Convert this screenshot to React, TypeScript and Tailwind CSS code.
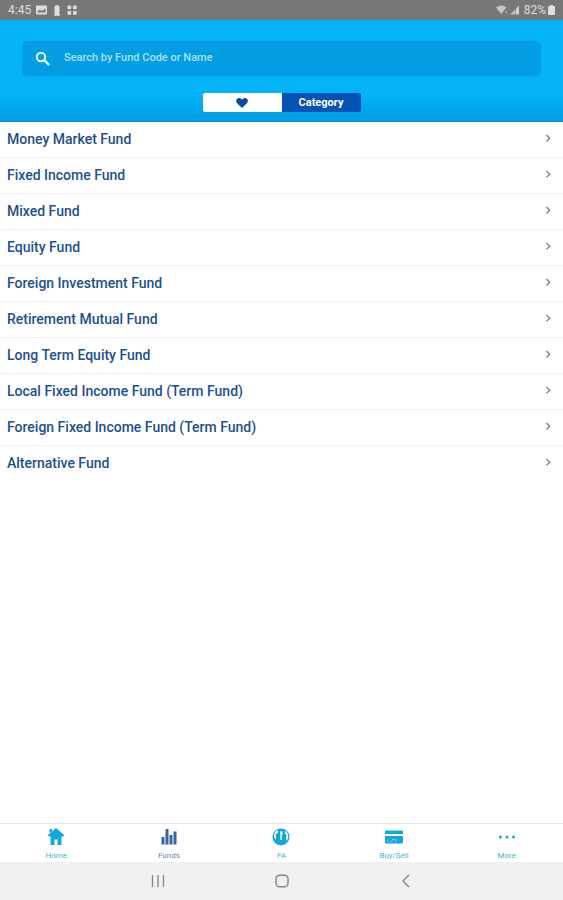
import { useState } from "react";
import type { ReactNode } from "react";

const categories = [
  "Money Market Fund",
  "Fixed Income Fund",
  "Mixed Fund",
  "Equity Fund",
  "Foreign Investment Fund",
  "Retirement Mutual Fund",
  "Long Term Equity Fund",
  "Local Fixed Income Fund (Term Fund)",
  "Foreign Fixed Income Fund (Term Fund)",
  "Alternative Fund",
];

function StatusBar() {
  return (
    <div className="flex h-5 items-center justify-between bg-[#777777] px-2 text-[#dedede]">
      <div className="flex items-center gap-[5px]">
        <span className="text-[12px] leading-5">4:45</span>
        <svg width="11" height="10" viewBox="0 0 11 10" fill="currentColor">
          <path fillRule="evenodd" d="M1 .5h9a1 1 0 0 1 1 1v7a1 1 0 0 1-1 1H1a1 1 0 0 1-1-1v-7a1 1 0 0 1 1-1Zm.5 7h8V3.200L6 6 4 4.600 1.500 6.500Z" />
        </svg>
        <svg width="10" height="11" viewBox="0 0 10 11" fill="currentColor">
          <path d="M5 0a2.800 2.800 0 0 1 2.200 4.400L8 5.500 7.200 7l.8 3.700H2L2.800 7 2 5.500l.8-1.100A2.800 2.800 0 0 1 5 0Z" />
        </svg>
        <svg width="10" height="10" viewBox="0 0 10 10" fill="currentColor">
          <rect x="0.500" y="0.500" width="3.700" height="3.700" rx="1" />
          <rect x="6" y="0.500" width="3.700" height="3.700" rx="1" />
          <rect x="0.500" y="6" width="3.700" height="3.700" rx="1" />
          <rect x="6" y="6" width="3.700" height="3.700" rx="1" />
        </svg>
      </div>
      <div className="flex items-center gap-[2px]">
        <svg width="12" height="10" viewBox="0 0 12 10" fill="currentColor">
          <path d="M0 2.500a7.800 7.800 0 0 1 10.400 0L5.200 9Z" opacity="0.750" />
          <path d="M9 6.500h2.500L10.200 9Z" opacity="0.600" />
        </svg>
        <svg width="10" height="10" viewBox="0 0 10 10" fill="currentColor">
          <path d="M0 9.500 5.500 4v5.500Z" opacity="0.700" />
          <path d="M6 3.500 9 .5v9H6Z" opacity="0.850" />
        </svg>
        <span className="pl-[2px] text-[12px] leading-5">82%</span>
        <svg width="7" height="10" viewBox="0 0 7 10" fill="currentColor">
          <path d="M2 0h3v1h1a1 1 0 0 1 1 1v7a1 1 0 0 1-1 1H1a1 1 0 0 1-1-1V2a1 1 0 0 1 1-1h1Z" />
        </svg>
      </div>
    </div>
  );
}

function Header({ tab, onTab }: { tab: string; onTab: (tab: string) => void }) {
  return (
    <header className="flex flex-col items-center bg-linear-to-b from-[#03b3f5] from-75% to-[#0299e1] px-[22px] pb-[10px] pt-[21px]">
      <label className="flex h-[35px] w-full items-center rounded-[5px] bg-[#029de3] pl-[13px]">
        <svg width="16" height="16" viewBox="0 0 16 16" fill="none" stroke="#e9fafe" strokeWidth="2">
          <circle cx="6" cy="6" r="4.200" />
          <path d="m9.200 9.200 5 5" strokeWidth="2.400" />
        </svg>
        <input
          type="text"
          aria-label="Search funds"
          placeholder="Search by Fund Code or Name"
          className="ml-[13px] min-w-0 flex-1 bg-transparent text-[11px] font-medium text-white outline-none placeholder:text-[#a9e2f7]"
        />
      </label>
      <div className="mt-[17px] flex h-[19px] w-[158px] overflow-hidden rounded-[2px]">
        <button
          type="button"
          aria-label="Favourites"
          onClick={() => onTab("favourites")}
          className="flex flex-1 items-center justify-center bg-white"
        >
          <svg width="12" height="10" viewBox="0 0 12 10" fill="#0749a4">
            <path d="M6 10 1.400 5.600C-.2 4-.2 2 .9.900 2.300-.5 4.700-.3 6 1.700 7.300-.3 9.700-.5 11.100.9c1.100 1.100 1.100 3.100-.5 4.700Z" />
          </svg>
        </button>
        <button
          type="button"
          aria-pressed={tab === "category"}
          onClick={() => onTab("category")}
          className="flex-1 bg-[#0552b2] text-[11px] font-bold leading-[19px] text-white"
        >
          Category
        </button>
      </div>
    </header>
  );
}

function CategoryRow({ name }: { name: string }) {
  return (
    <li className="border-b border-[#f0f0f0] last:border-b-0">
      <a href="#" className="flex h-[35px] items-center justify-between pl-[7px] pr-[11px]">
        <span className="text-[14px] font-medium text-[#1d4f91]">{name}</span>
        <svg width="7" height="14" viewBox="0 0 7 14" fill="none" stroke="#707070" strokeWidth="1.200">
          <path d="m1.500 2 3.200 3.200-3.200 3.200" />
        </svg>
      </a>
    </li>
  );
}

function NavItem({ label, active, children }: { label: string; active?: boolean; children: ReactNode }) {
  return (
    <a
      href="#"
      className={
        active
          ? "flex flex-1 flex-col items-center pt-1 text-[#3b649f]"
          : "flex flex-1 flex-col items-center pt-1 text-[#12a7dc]"
      }
    >
      <svg width="20" height="18" viewBox="0 0 20 18" fill="currentColor">
        {children}
      </svg>
      <span className={active ? "mt-[5px] text-[8px] leading-[10px] text-[#7188a0]" : "mt-[5px] text-[8px] leading-[10px] text-[#40b5cd]"}>
        {label}
      </span>
    </a>
  );
}

function BottomNav() {
  return (
    <nav className="flex h-[39px] border-t border-[#e6e6e6] bg-white">
      <NavItem label="Home">
        <path d="M10 0 1.800 7.200l1.400 1.600L4.500 8v9h4v-5.500h3V17h4V8l1.300.8 1.400-1.600L10 0Z" />
        <path d="M3.500 1h2.500v2.500L3.500 5Z" />
      </NavItem>
      <NavItem label="Funds" active>
        <rect x="2.500" y="9" width="3" height="7.500" />
        <rect x="6.500" y="1" width="3" height="15.500" />
        <rect x="10.500" y="7" width="3" height="9.500" />
        <rect x="14.500" y="3.500" width="3" height="13" />
      </NavItem>
      <NavItem label="FA">
        <circle cx="10" cy="9" r="8.500" />
        <g fill="#ffffff">
          <path d="M3.200 6.200C4 4 5.600 2.700 7 2.200v2.600L4.800 6.200v5.600C3.300 10.300 2.800 8 3.200 6.200Z" />
          <path d="M9 3.500h2.700v2.300l-.9 1V12H9.400V7Z" />
          <path d="M14 2.700c2.200 1.300 3.400 3.600 3.200 6.200-.1 1.600-.8 3-1.800 4V6.500L14 5.500Z" />
        </g>
      </NavItem>
      <NavItem label="Buy/Sell">
        <path d="M2 2.500h16a1 1 0 0 1 1 1V6H1V3.500a1 1 0 0 1 1-1Z" />
        <path d="M1 8h18v6.500a1 1 0 0 1-1 1H2a1 1 0 0 1-1-1Z" />
        <path d="M3.500 13.500V11.500M5.500 13.500h2M8 13.500v-2h4v2" fill="none" stroke="#8fd5ee" strokeWidth="0.800" />
      </NavItem>
      <NavItem label="More">
        <circle cx="3.500" cy="9" r="1.500" />
        <circle cx="10" cy="9" r="1.500" />
        <circle cx="16.500" cy="9" r="1.500" />
      </NavItem>
    </nav>
  );
}

function SystemNav() {
  return (
    <div className="flex h-[38px] items-center justify-center gap-[108px] bg-[#f0f0f0] text-[#858585]">
      <button type="button" aria-label="Recent apps">
        <svg width="16" height="16" viewBox="0 0 16 16" fill="none" stroke="currentColor" strokeWidth="1.300">
          <path d="M2.500 2v12M8 2v12M13.500 2v12" />
        </svg>
      </button>
      <button type="button" aria-label="Home screen">
        <svg width="16" height="16" viewBox="0 0 16 16" fill="none" stroke="currentColor" strokeWidth="1.400">
          <rect x="2" y="2.300" width="12" height="11.400" rx="3.500" />
        </svg>
      </button>
      <button type="button" aria-label="Back">
        <svg width="16" height="16" viewBox="0 0 16 16" fill="none" stroke="currentColor" strokeWidth="1.400">
          <path d="M11 2 5 8l6 6" />
        </svg>
      </button>
    </div>
  );
}

export default function App() {
  const [tab, setTab] = useState("category");

  return (
    <div className="flex min-h-screen flex-col bg-white font-[Roboto,sans-serif]">
      <StatusBar />
      <Header tab={tab} onTab={setTab} />
      <main className="flex-1">
        <ul>
          {categories.map((name) => (
            <CategoryRow key={name} name={name} />
          ))}
        </ul>
      </main>
      <BottomNav />
      <SystemNav />
    </div>
  );
}
